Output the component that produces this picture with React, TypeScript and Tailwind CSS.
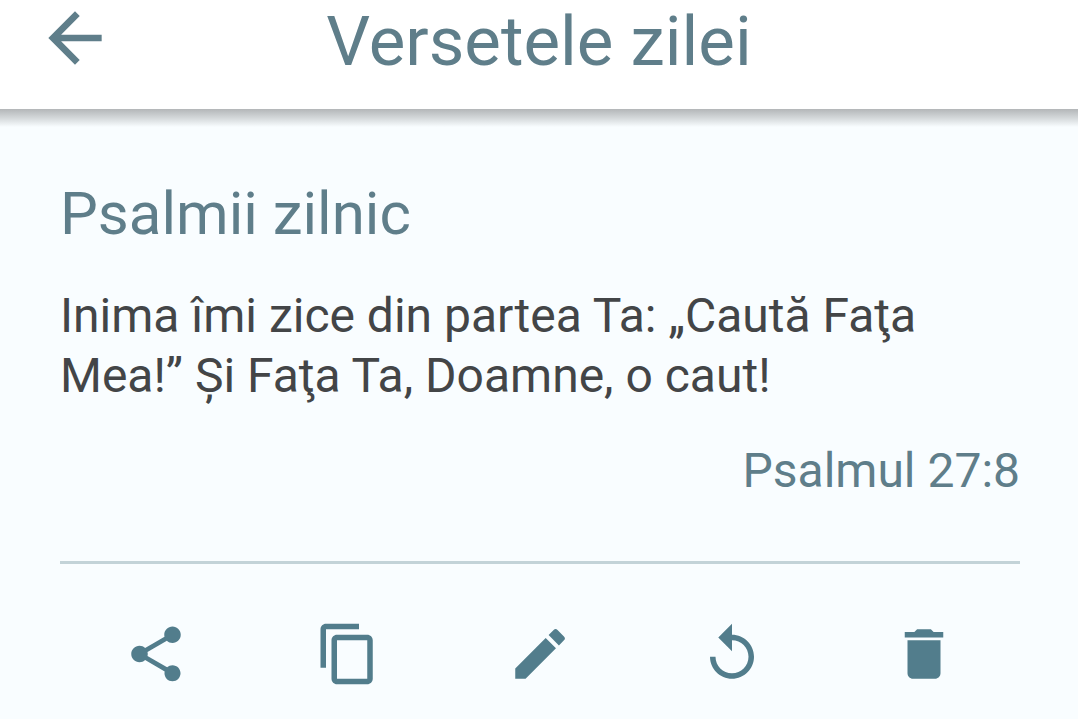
import type { ReactNode } from "react"
import { MdArrowBack, MdShare, MdContentCopy, MdEdit, MdReplay, MdDelete } from "react-icons/md"

interface ActionButtonProps {
  label: string
  children: ReactNode
}

function ActionButton({ label, children }: ActionButtonProps) {
  return (
    <button type="button" aria-label={label} className="flex flex-1 justify-center">
      {children}
    </button>
  )
}

export default function App() {
  return (
    <div className="min-h-screen bg-[#f9fdff] font-[Roboto,sans-serif] text-[#5f7e8a]">
      <header className="relative grid h-[109px] grid-cols-[80px_1fr_80px] bg-white px-[35px]">
        <button type="button" aria-label="Înapoi" className="flex h-19 items-center justify-center">
          <MdArrowBack className="size-20 shrink-0" />
        </button>
        <h1 className="pt-1 text-center text-[69px] leading-[76px]">Versetele zilei</h1>
        <div className="absolute inset-x-0 top-full h-[18px] bg-linear-to-b from-[#b3b6b8] via-[#d4d8da] to-[#f9fdff]" />
      </header>

      <main className="pt-[73px] pr-[58px] pl-[60px]">
        <h2 className="text-[60px] leading-[64px]">Psalmii zilnic</h2>
        <p className="mt-10 text-[48px] leading-[60px] text-[#434547]">
          Inima îmi zice din partea Ta: „Caută Faţa Mea!” Și Faţa Ta, Doamne, o caut!
        </p>
        <p className="mt-[35px] text-right text-[48px] leading-[60px]">Psalmul 27:8</p>
        <div className="mt-15 flex items-center border-t-3 border-[#c3d3d8] pt-[57px] text-[#527d8c]">
          <ActionButton label="Distribuie"><MdShare className="size-[66px]" /></ActionButton>
          <ActionButton label="Copiază"><MdContentCopy className="size-[66px]" /></ActionButton>
          <ActionButton label="Editează"><MdEdit className="size-[66px]" /></ActionButton>
          <ActionButton label="Reîncarcă"><MdReplay className="size-[66px]" /></ActionButton>
          <ActionButton label="Șterge"><MdDelete className="size-[66px]" /></ActionButton>
        </div>
      </main>
    </div>
  )
}
